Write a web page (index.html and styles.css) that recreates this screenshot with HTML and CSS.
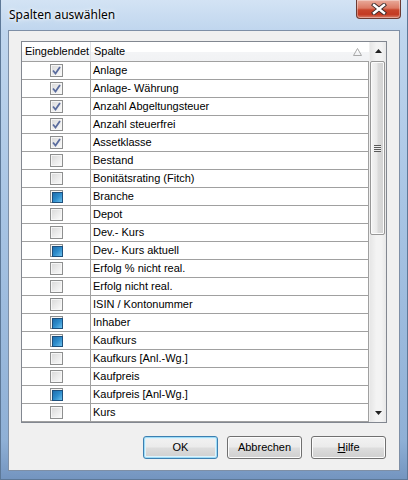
FILE: index.html
```
<!DOCTYPE html>
<html>
<head lang="de">
    <meta charset="UTF-8">
    <title>Spalten auswählen</title>
    <link rel="stylesheet" href="styles.css">
</head>
<body>
<div class="window">
    <div class="titlebar">
        <span class="title">Spalten auswählen</span>
        <div class="close">
            <svg width="16" height="12" viewBox="0 0 16 12">
                <path d="M3 2 L13 10 M13 2 L3 10" stroke="#3a2a2a" stroke-width="4.2" stroke-linecap="square"/>
                <path d="M3 2 L13 10 M13 2 L3 10" stroke="#ffffff" stroke-width="2.4" stroke-linecap="square"/>
            </svg>
        </div>
    </div>
    <div class="client">
        <div class="table">
            <div class="list">
                <div class="head">
                    <div class="c1">Eingeblendet</div>
                    <div class="c2">Spalte
                        <svg class="sort" width="9" height="8" viewBox="0 0 9 8"><path d="M4.5 0.5 L8.5 7.5 L0.5 7.5 Z" fill="none" stroke="#a8a8a8"/></svg>
                    </div>
                </div>
                <div class="row"><div class="c1"><span class="cb on"></span></div><div class="c2">Anlage</div></div>
                <div class="row"><div class="c1"><span class="cb on"></span></div><div class="c2">Anlage- Währung</div></div>
                <div class="row"><div class="c1"><span class="cb on"></span></div><div class="c2">Anzahl Abgeltungsteuer</div></div>
                <div class="row"><div class="c1"><span class="cb on"></span></div><div class="c2">Anzahl steuerfrei</div></div>
                <div class="row"><div class="c1"><span class="cb on"></span></div><div class="c2">Assetklasse</div></div>
                <div class="row"><div class="c1"><span class="cb"></span></div><div class="c2">Bestand</div></div>
                <div class="row"><div class="c1"><span class="cb"></span></div><div class="c2">Bonitätsrating (Fitch)</div></div>
                <div class="row"><div class="c1"><span class="cb fill"></span></div><div class="c2">Branche</div></div>
                <div class="row"><div class="c1"><span class="cb"></span></div><div class="c2">Depot</div></div>
                <div class="row"><div class="c1"><span class="cb"></span></div><div class="c2">Dev.- Kurs</div></div>
                <div class="row"><div class="c1"><span class="cb fill"></span></div><div class="c2">Dev.- Kurs aktuell</div></div>
                <div class="row"><div class="c1"><span class="cb"></span></div><div class="c2">Erfolg % nicht real.</div></div>
                <div class="row"><div class="c1"><span class="cb"></span></div><div class="c2">Erfolg nicht real.</div></div>
                <div class="row"><div class="c1"><span class="cb"></span></div><div class="c2">ISIN / Kontonummer</div></div>
                <div class="row"><div class="c1"><span class="cb fill"></span></div><div class="c2">Inhaber</div></div>
                <div class="row"><div class="c1"><span class="cb fill"></span></div><div class="c2">Kaufkurs</div></div>
                <div class="row"><div class="c1"><span class="cb"></span></div><div class="c2">Kaufkurs [Anl.-Wg.]</div></div>
                <div class="row"><div class="c1"><span class="cb"></span></div><div class="c2">Kaufpreis</div></div>
                <div class="row"><div class="c1"><span class="cb fill"></span></div><div class="c2">Kaufpreis [Anl-Wg.]</div></div>
                <div class="row"><div class="c1"><span class="cb"></span></div><div class="c2">Kurs</div></div>
            </div>
            <div class="scroll">
                <div class="arrow"><svg width="7" height="4" viewBox="0 0 7 4"><path d="M0 4 L3.5 0 L7 4 Z" fill="#222"/></svg></div>
                <div class="track">
                    <div class="thumb"><span class="grip"></span></div>
                </div>
                <div class="arrow"><svg width="7" height="4" viewBox="0 0 7 4"><path d="M0 0 L3.5 4 L7 0 Z" fill="#222"/></svg></div>
            </div>
        </div>
        <div class="buttons">
            <div class="btn def">OK</div>
            <div class="btn">Abbrechen</div>
            <div class="btn"><u>H</u>ilfe</div>
        </div>
    </div>
</div>
</body>
</html>
```

FILE: styles.css
```
*{
    padding: 0;
    margin: 0;
    box-sizing: border-box;
}
body{
    width: 408px;
    height: 480px;
    overflow: hidden;
    font-family: "Liberation Sans", Arial, sans-serif;
    font-size: 11px;
    color: #000;
}
.window{
    width: 408px;
    height: 480px;
    display: flex;
    flex-direction: column;
    padding: 0 7px 8px 7px;
    background: linear-gradient(to bottom, #d3e3f4 0, #c0d6ee 30px, #a9c5e4 200px, #8fb0d6 440px, #7394bf 480px);
    border: 1px solid #5d7897;
    border-top: none;
}
.titlebar{
    height: 30px;
    display: flex;
    justify-content: space-between;
    align-items: flex-start;
}
.title{
    margin-top: 6px;
    margin-left: 1px;
    font-family: "Noto Sans", "Open Sans", sans-serif;
    font-size: 12px;
    color: #000;
    text-shadow: 0 0 6px #fff, 0 0 3px #fff;
}
.close{
    width: 45px;
    height: 19px;
    margin-right: -1px;
    display: flex;
    align-items: center;
    justify-content: center;
    border: 1px solid #6b3a32;
    border-top: none;
    border-radius: 0 0 4px 4px;
    background: linear-gradient(to bottom, #e9ab9b 0, #dc7a64 45%, #c8452c 55%, #c33a22 80%, #d9806b 100%);
    box-shadow: inset 0 0 0 1px rgba(255,255,255,.35);
}
.client{
    flex: 1;
    display: flex;
    flex-direction: column;
    background: #f0f0f0;
    border: 1px solid #7e8fa6;
    padding: 10px 12px 0 12px;
}
.table{
    height: 382px;
    display: flex;
    border: 1px solid #828790;
    background: #fff;
}
.list{
    flex: 1;
    overflow: hidden;
}
.head{
    height: 20px;
    display: flex;
    border-bottom: 1px solid #a0a0a0;
    background: linear-gradient(to bottom, #fff 0, #fff 50%, #f3f4f6 55%, #f1f2f4 100%);
}
.head .c1{
    border-right: 1px solid #e0e2e6;
    text-align: left;
    padding-left: 2px;
    line-height: 19px;
}
.head .c2{
    line-height: 19px;
    padding-left: 3px;
    position: relative;
}
.sort{
    position: absolute;
    right: 7px;
    top: 6px;
}
.row{
    height: 18px;
    display: flex;
    border-bottom: 1px solid #a0a0a0;
}
.c1{
    width: 69px;
    flex: none;
    border-right: 1px solid #a0a0a0;
    display: flex;
    align-items: center;
    justify-content: center;
}
.c2{
    flex: 1;
    padding-left: 2px;
    line-height: 17px;
    white-space: nowrap;
    border-right: 1px solid #a0a0a0;
}
.head .c2{
    border-right: none;
}
.cb{
    width: 13px;
    height: 13px;
    border: 1px solid #8e8f8f;
    background: linear-gradient(135deg, #d8d8d8 0, #eaeaea 50%, #fcfcfc 100%);
    box-shadow: inset 0 0 0 1px #f6f6f6;
    position: relative;
}
.cb.on::after{
    content: "";
    position: absolute;
    left: 1px;
    top: 1px;
    width: 9px;
    height: 9px;
    background: url("data:image/svg+xml;utf8,<svg xmlns='http://www.w3.org/2000/svg' width='9' height='9'><path d='M1 4.5 L3.5 7.5 L8 1' fill='none' stroke='%235a6c9e' stroke-width='1.8'/></svg>") no-repeat;
}
.cb.fill::after{
    content: "";
    position: absolute;
    left: 1px;
    top: 1px;
    width: 9px;
    height: 9px;
    border: 1px solid #1d4f7c;
    background: linear-gradient(135deg, #1e6eae 0, #2e8dcc 50%, #6cc0ec 100%);
}
.scroll{
    width: 17px;
    flex: none;
    display: flex;
    flex-direction: column;
    background: linear-gradient(to right, #e6e6e6, #f3f3f3 40%, #f3f3f3 70%, #e8e8e8);
    border-left: 1px solid #f0f0f0;
}
.arrow{
    height: 18px;
    display: flex;
    align-items: center;
    justify-content: center;
}
.track{
    flex: 1;
    padding: 1px 0 0 0;
}
.thumb{
    height: 174px;
    margin: 0 1px 0 0;
    border: 1px solid #979797;
    border-radius: 2px;
    background: linear-gradient(to right, #f4f4f4 0, #e9e9e9 45%, #dadada 55%, #d2d2d2 100%);
    box-shadow: inset 0 0 0 1px #fbfbfb;
    display: flex;
    align-items: center;
    justify-content: center;
}
.grip{
    width: 7px;
    height: 7px;
    background: linear-gradient(to bottom, #5a5a5a 0, #5a5a5a 1px, #eee 1px, #eee 2px, #5a5a5a 2px, #5a5a5a 3px, #eee 3px, #eee 4px, #5a5a5a 4px, #5a5a5a 5px, #eee 5px, #eee 6px, #5a5a5a 6px, #5a5a5a 7px);
}
.buttons{
    display: flex;
    justify-content: flex-end;
    gap: 9px;
    padding: 13px 1px 0 0;
}
.btn{
    width: 75px;
    height: 23px;
    border: 1px solid #707070;
    border-radius: 3px;
    background: linear-gradient(to bottom, #f2f2f2 0, #ebebeb 48%, #dddddd 52%, #cfcfcf 100%);
    box-shadow: inset 0 0 0 1px #fcfcfc;
    text-align: center;
    line-height: 21px;
}
.btn.def{
    border-color: #3c7fb1;
    box-shadow: inset 0 0 0 1px #9fdcf6, inset 0 0 0 2px #dff2fb;
}
```
